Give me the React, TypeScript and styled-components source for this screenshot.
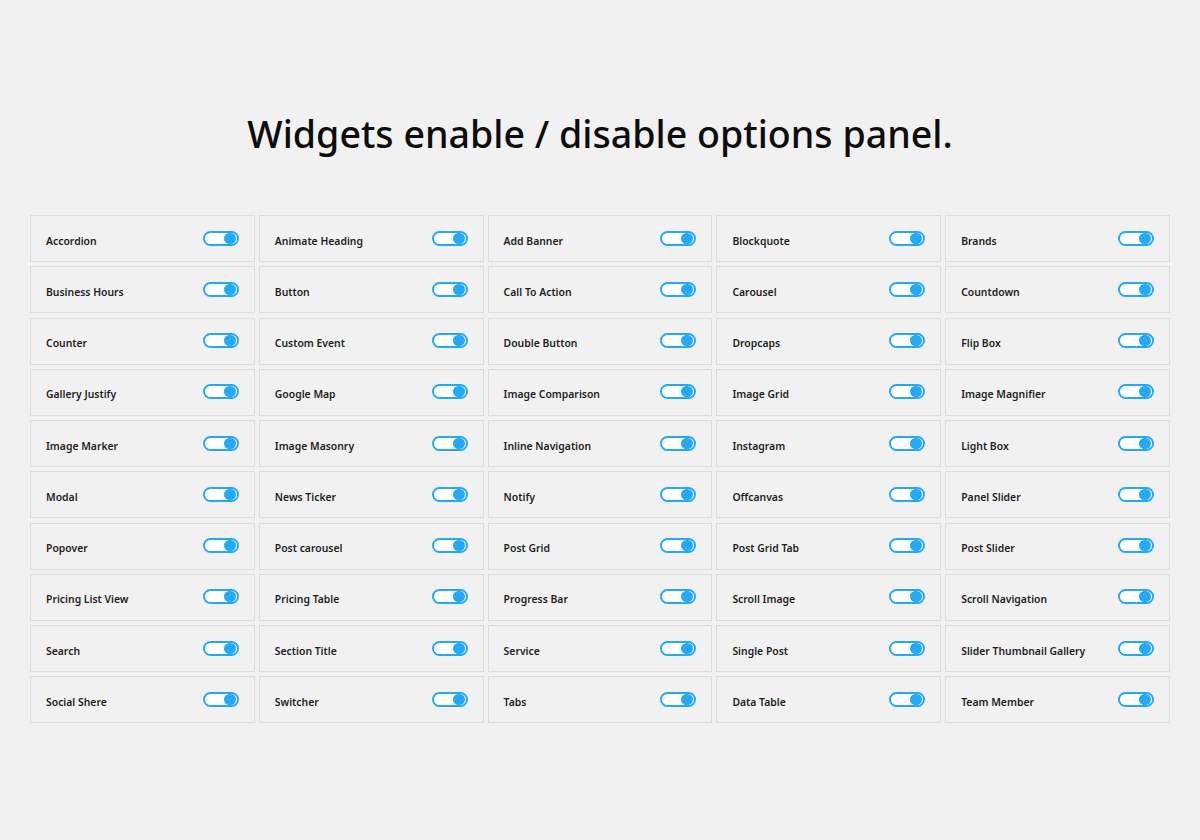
import styled, { createGlobalStyle } from "styled-components"

const widgets = [
  "Accordion", "Animate Heading", "Add Banner", "Blockquote", "Brands",
  "Business Hours", "Button", "Call To Action", "Carousel", "Countdown",
  "Counter", "Custom Event", "Double Button", "Dropcaps", "Flip Box",
  "Gallery Justify", "Google Map", "Image Comparison", "Image Grid", "Image Magnifier",
  "Image Marker", "Image Masonry", "Inline Navigation", "Instagram", "Light Box",
  "Modal", "News Ticker", "Notify", "Offcanvas", "Panel Slider",
  "Popover", "Post carousel", "Post Grid", "Post Grid Tab", "Post Slider",
  "Pricing List View", "Pricing Table", "Progress Bar", "Scroll Image", "Scroll Navigation",
  "Search", "Section Title", "Service", "Single Post", "Slider Thumbnail Gallery",
  "Social Shere", "Switcher", "Tabs", "Data Table", "Team Member",
]

const GlobalStyle = createGlobalStyle`
  html, body {
    margin: 0;
    background: #f1f1f1;
  }
  body {
    font-family: "Noto Sans", "Open Sans", sans-serif;
  }
`

const Page = styled.div`
  width: 1200px;
  height: 840px;
  padding: 0 30px;
  box-sizing: border-box;
  background: #f1f1f1;
`

const Heading = styled.h1`
  margin: 0;
  padding-top: 107px;
  height: 215px;
  box-sizing: border-box;
  text-align: center;
  font-family: "Noto Sans", sans-serif;
  font-weight: 500;
  font-size: 37.6px;
  line-height: 54px;
  color: #0d0d0d;
`

const Grid = styled.div`
  display: grid;
  grid-template-columns: repeat(5, 1fr);
  column-gap: 4px;
  row-gap: 4.25px;
`

const Card = styled.div`
  height: 47px;
  box-sizing: border-box;
  border: 1px solid #dcdcdc;
  display: flex;
  align-items: center;
  justify-content: space-between;
  padding: 0 15px;
`

const Label = styled.span`
  font-size: 10.4px;
  font-weight: 600;
  color: #1e1e1e;
  margin-top: 4px;
`

const Toggle = styled.span<{ $on: boolean }>`
  width: 36px;
  height: 15px;
  box-sizing: border-box;
  border: 2px solid #24a9f4;
  border-radius: 8px;
  background: #fff;
  display: flex;
  align-items: center;
  justify-content: ${({ $on }) => ($on ? "flex-end" : "flex-start")};
  padding: 0 1px;
  margin-top: -1px;

  &::after {
    content: "";
    width: 12px;
    height: 11px;
    border-radius: 6px;
    background: #24a9f4;
  }
`

export default function App() {
  return (
    <Page>
      <GlobalStyle />
      <Heading>Widgets enable / disable options panel.</Heading>
      <Grid>
        {widgets.map((name) => (
          <Card key={name}>
            <Label>{name}</Label>
            <Toggle $on />
          </Card>
        ))}
      </Grid>
    </Page>
  )
}
